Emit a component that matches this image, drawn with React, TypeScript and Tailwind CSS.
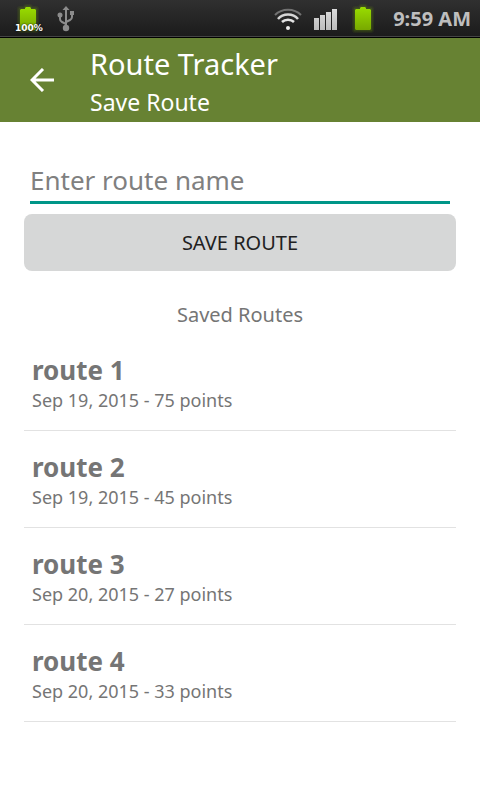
type Route = {
  name: string;
  date: string;
  points: number;
};

const routes: Route[] = [
  { name: "route 1", date: "Sep 19, 2015", points: 75 },
  { name: "route 2", date: "Sep 19, 2015", points: 45 },
  { name: "route 3", date: "Sep 20, 2015", points: 27 },
  { name: "route 4", date: "Sep 20, 2015", points: 33 },
];

function BatteryIcon({ id }: { id: string }) {
  return (
    <svg width="24" height="32" viewBox="0 0 24 32" aria-hidden="true">
      <defs>
        <linearGradient id={id} x1="0" y1="0" x2="0" y2="1">
          <stop offset="0" stopColor="#99dd00" />
          <stop offset="1" stopColor="#78a800" />
        </linearGradient>
      </defs>
      <path d="M4 6h5l1-2h4l1 2h5v21H4z" fill="none" stroke="#8fd000" strokeOpacity="0.08" strokeWidth="6" strokeLinejoin="round" />
      <path d="M4 6h5l1-2h4l1 2h5v21H4z" fill="none" stroke="#8fd000" strokeOpacity="0.15" strokeWidth="3" strokeLinejoin="round" />
      <path d="M5 6h4V5l1-1h4l1 1v1h4l1 1v19l-1 1H5l-1-1V7z" fill={`url(#${id})`} />
    </svg>
  );
}

function UsbIcon() {
  return (
    <svg width="18" height="28" viewBox="0 0 18 28" aria-hidden="true">
      <g fill="none" stroke="#8c8c8c" strokeWidth="2">
        <path d="M9 4v18" />
        <path d="M3 11v3q0 2 2 3l4 2" />
        <path d="M15 8v4q0 2-2 3l-4 2" />
      </g>
      <g fill="#8c8c8c">
        <path d="M9 1l3.500 4h-7z" />
        <circle cx="3" cy="10" r="2.500" />
        <path d="M13 6h4v4h-4z" />
        <circle cx="9" cy="23" r="3.200" />
      </g>
    </svg>
  );
}

function WifiIcon() {
  return (
    <svg width="28" height="24" viewBox="0 0 28 24" fill="none" aria-hidden="true">
      <path d="M1 8C8 1 20 1 27 8" stroke="#727272" strokeWidth="2" />
      <path d="M4 12C9 6 19 6 24 12" stroke="#d6d6d6" strokeWidth="2.500" />
      <path d="M8 15C11 12 17 12 20 15" stroke="#e4e4e4" strokeWidth="2.500" />
      <circle cx="14" cy="21" r="2" fill="#eee" />
    </svg>
  );
}

function SignalIcon() {
  return (
    <svg width="24" height="22" viewBox="0 0 24 22" aria-hidden="true">
      <defs>
        <linearGradient id="signal" x1="0" y1="0" x2="0" y2="22" gradientUnits="userSpaceOnUse">
          <stop offset="0" stopColor="#dedede" />
          <stop offset="1" stopColor="#bcbcbc" />
        </linearGradient>
      </defs>
      <path d="M0 10h5v12H0zM6 7h5v15H6zM12 4h5v18h-5zM18 1h5v21h-5z" fill="url(#signal)" />
    </svg>
  );
}

function StatusBar() {
  return (
    <div className="flex h-[38px] items-center border-b border-black bg-linear-to-b from-[#303030] to-[#1b1b1b] pr-[9px] pl-4 shadow-[inset_0_-1px_0_#444]">
      <div className="relative h-8 w-6">
        <BatteryIcon id="charge" />
        <span className="absolute -left-px top-4 font-['DejaVu_Sans'] text-[9px] leading-[18px] font-bold text-white [text-shadow:0_0_2px_#000]">
          100%
        </span>
      </div>
      <div className="ml-[17px]">
        <UsbIcon />
      </div>
      <div className="ml-auto flex items-center">
        <WifiIcon />
        <div className="ml-3">
          <SignalIcon />
        </div>
        <div className="ml-[13px]">
          <BatteryIcon id="level" />
        </div>
        <span className="ml-[18px] text-[20px] leading-6 font-bold text-[#bebebe]">9:59 AM</span>
      </div>
    </div>
  );
}

function Header() {
  return (
    <header className="flex h-[84px] items-center bg-[#678233] pl-[30px] text-white">
      <button type="button" aria-label="Back">
        <svg width="24" height="24" viewBox="0 0 24 24" fill="none" stroke="white" strokeWidth="3" aria-hidden="true">
          <path d="M24 12H2M13 1L2 12l11 11" />
        </svg>
      </button>
      <div className="ml-9 pt-1">
        <h1 className="text-[29px] leading-10">Route Tracker</h1>
        <p className="text-[23px] leading-9">Save Route</p>
      </div>
    </header>
  );
}

function RouteRow({ route }: { route: Route }) {
  return (
    <li className="border-b border-[#e2e2e2] px-2 pt-[18px] pb-[18px]">
      <h3 className="text-[26px] leading-9 font-bold">{route.name}</h3>
      <p className="text-[18px] leading-6">
        {route.date} - {route.points} points
      </p>
    </li>
  );
}

export default function App() {
  return (
    <div className="min-h-screen bg-white font-['Noto_Sans',sans-serif] text-[#757575]">
      <StatusBar />
      <Header />
      <main className="px-6 pt-9">
        <form onSubmit={(e) => e.preventDefault()}>
          <div className="px-[6px]">
            <input
              type="text"
              aria-label="Route name"
              placeholder="Enter route name"
              className="block h-[46px] w-full border-b-3 border-[#009688] text-[26px] outline-none placeholder:text-[#808080]"
            />
          </div>
          <button type="submit" className="mt-[10px] block h-[57px] w-full rounded-lg bg-[#d6d7d7] text-[20px] text-[#212121]">
            SAVE ROUTE
          </button>
        </form>
        <h2 className="mt-7 text-center text-[20px] leading-8">Saved Routes</h2>
        <ul className="mt-[3px]">
          {routes.map((route) => (
            <RouteRow key={route.name} route={route} />
          ))}
        </ul>
      </main>
    </div>
  );
}
